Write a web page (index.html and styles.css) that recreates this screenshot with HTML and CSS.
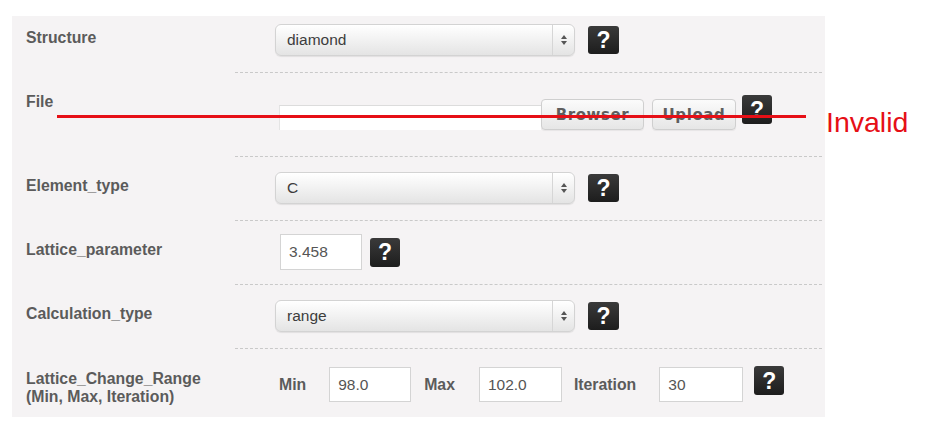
FILE: index.html
```html
<!DOCTYPE html>
<html>
<head>
<meta charset="utf-8">
<link rel="stylesheet" href="styles.css">
</head>
<body>
<div class="page">
  <form class="panel">
    <div class="row row-first">
      <div class="label">Structure</div>
      <div class="field">
        <div class="select"><span class="select-text">diamond</span><span class="select-arrow"><svg width="8" height="12" viewBox="0 0 8 12"><path d="M4 1 L7 5 L1 5 Z" fill="#555"/><path d="M4 11 L7 7 L1 7 Z" fill="#555"/></svg></span></div>
        <span class="help">?</span>
      </div>
    </div>
    <div class="row row-file">
      <div class="label">File</div>
      <div class="field">
        <div class="file-input"></div>
        <span class="btn btn-browse">Browser</span>
        <span class="btn btn-upload">Upload</span>
        <span class="help help-file">?</span>
      </div>
    </div>
    <div class="row">
      <div class="label">Element_type</div>
      <div class="field">
        <div class="select"><span class="select-text">C</span><span class="select-arrow"><svg width="8" height="12" viewBox="0 0 8 12"><path d="M4 1 L7 5 L1 5 Z" fill="#555"/><path d="M4 11 L7 7 L1 7 Z" fill="#555"/></svg></span></div>
        <span class="help">?</span>
      </div>
    </div>
    <div class="row row-lattice">
      <div class="label">Lattice_parameter</div>
      <div class="field">
        <div class="text-input text-input-lattice">3.458</div>
        <span class="help help-small">?</span>
      </div>
    </div>
    <div class="row">
      <div class="label">Calculation_type</div>
      <div class="field">
        <div class="select"><span class="select-text">range</span><span class="select-arrow"><svg width="8" height="12" viewBox="0 0 8 12"><path d="M4 1 L7 5 L1 5 Z" fill="#555"/><path d="M4 11 L7 7 L1 7 Z" fill="#555"/></svg></span></div>
        <span class="help">?</span>
      </div>
    </div>
    <div class="row row-last">
      <div class="label">Lattice_Change_Range<br>(Min, Max, Iteration)</div>
      <div class="field">
        <span class="sub-label sub-min">Min</span>
        <div class="text-input in-min">98.0</div>
        <span class="sub-label sub-max">Max</span>
        <div class="text-input in-max">102.0</div>
        <span class="sub-label sub-iter">Iteration</span>
        <div class="text-input in-iter">30</div>
        <span class="help help-last">?</span>
      </div>
    </div>
  </form>
  <div class="strike"></div>
  <div class="invalid">Invalid</div>
</div>
</body>
</html>
```
FILE: styles.css
```css
* { box-sizing: border-box; }
html, body { margin: 0; padding: 0; background: #ffffff; }
body { font-family: "Liberation Sans", Arial, Helvetica, sans-serif; }

.page {
  position: relative;
  width: 926px;
  height: 431px;
  padding: 16px 0 0 12px;
}

.panel {
  width: 813px;
  height: 401px;
  background: #f5f3f4;
  padding: 0 3px 0 14px;
  margin: 0;
}

.row {
  display: grid;
  grid-template-columns: 209px 587px;
  --pt: 15px;
  --pb: 16px;
  --lo: 5px;
}
.row-first { --pt: 8px; --pb: 16px; --lo: 5px; }
.row-file { --pt: 22px; --pb: 26px; --lo: -2px; }
.row-lattice { --pt: 13px; --pb: 14px; --lo: 7px; }
.row-last { --pt: 18px; --pb: 15px; --lo: 3px; }

.label {
  padding-top: calc(var(--pt) + var(--lo));
  font-size: 15.8px;
  line-height: 18px;
  font-weight: bold;
  color: #5b5b5b;
  white-space: nowrap;
}

.field {
  display: flex;
  align-items: center;
  padding: var(--pt) 0 var(--pb) 40px;
  border-bottom: 1px dashed #c9c9c9;
}
.row-last .field { border-bottom: none; }
.row-file .field { align-items: flex-start; }

.select {
  display: flex;
  align-items: stretch;
  width: 300px;
  height: 32px;
  border: 1px solid #d3d3d3;
  border-radius: 6px;
  background: linear-gradient(#ffffff 0%, #f3f3f3 45%, #e4e4e4 100%);
  box-shadow: inset 0 1px 0 #ffffff, 0 1px 1px rgba(0,0,0,0.08);
}
.select-text {
  flex: 1;
  padding-left: 11px;
  font-size: 15.5px;
  line-height: 30px;
  color: #3d3d3d;
}
.select-arrow {
  width: 22px;
  border-left: 1px solid #d6d6d6;
  display: flex;
  align-items: center;
  justify-content: center;
}

.help {
  display: inline-flex;
  align-items: center;
  justify-content: center;
  width: 31px;
  height: 28px;
  margin-left: 13px;
  border-radius: 3px;
  background: linear-gradient(#3a3a3a, #1d1d1d);
  color: #ffffff;
  font-family: "Liberation Sans", Arial, sans-serif;
  font-weight: bold;
  font-size: 23px;
  line-height: 1;
  padding-top: 1px;
}
.help-small { width: 30px; height: 29px; margin-left: 8px; }
.help-file { width: 30px; height: 29px; margin-left: 6px; }
.help-last { width: 30px; height: 29px; margin-left: 11px; margin-top: -8px; }

.file-input {
  width: 262px;
  height: 25px;
  margin-top: 10px;
  margin-left: 4px;
  background: #ffffff;
  border-top: 1px solid #dcdcdc;
  border-left: 1px solid #e4e4e4;
}
.btn {
  display: inline-flex;
  align-items: center;
  justify-content: center;
  height: 31px;
  margin-top: 4px;
  border: 1px solid #cfcfcf;
  border-radius: 4px;
  background: linear-gradient(#fbfbfb, #e6e6e6);
  color: #5e5e5e;
  font-family: "DejaVu Sans", Verdana, sans-serif;
  font-weight: bold;
  font-size: 15px;
  letter-spacing: 0.6px;
  box-shadow: 0 1px 1px rgba(0,0,0,0.06);
}
.btn-browse { width: 103px; }
.btn-upload { width: 84px; margin-left: 8px; }

.text-input {
  height: 36px;
  width: 82px;
  background: #ffffff;
  border: 1px solid #d4d4d4;
  font-size: 15.5px;
  line-height: 34px;
  padding-left: 8px;
  color: #555555;
}
.text-input-lattice { margin-left: 5px; }

.sub-label {
  font-size: 15.8px;
  font-weight: bold;
  color: #5b5b5b;
}
.sub-min { margin-left: 4px; }
.in-min { margin-left: 23px; height: 35px; }
.sub-max { margin-left: 13px; }
.in-max { margin-left: 24px; width: 83px; height: 35px; }
.sub-iter { margin-left: 12px; }
.in-iter { margin-left: 23px; width: 84px; height: 35px; }

.strike {
  position: absolute;
  left: 57px;
  top: 115px;
  width: 749px;
  height: 3px;
  background: #e60f16;
}
.invalid {
  position: absolute;
  left: 826px;
  top: 105px;
  font-size: 28.5px;
  line-height: 34px;
  color: #e60f16;
  font-family: "Liberation Sans", Arial, sans-serif;
}
```
